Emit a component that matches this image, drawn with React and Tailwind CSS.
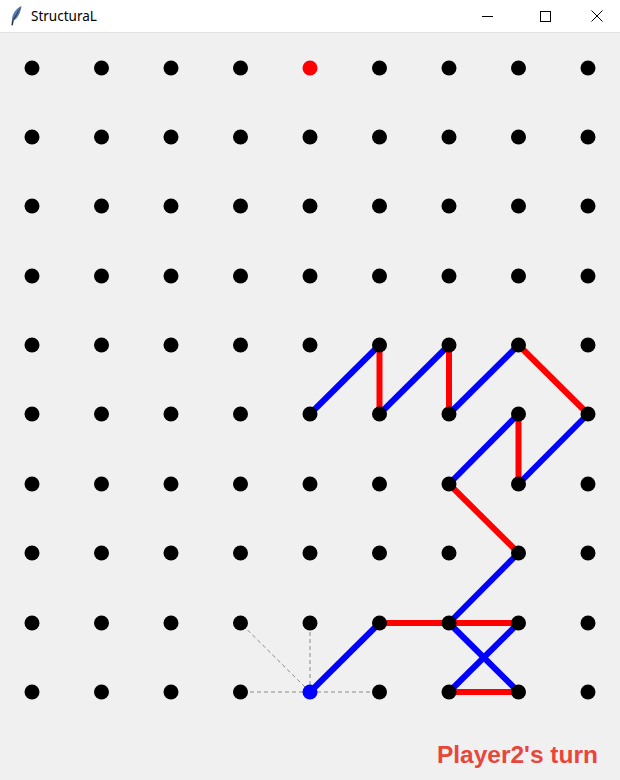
import React from 'react';

const xs = [32, 101.5, 171, 240.5, 310, 379.5, 449, 518.5, 588];
const ys = [35, 104, 173, 243, 312, 381, 451, 520, 590, 659];

const BLUE = '#0000ff';
const RED = '#ff0000';

// [c1, r1, c2, r2, colour]
const lines = [
    [4, 5, 5, 4, BLUE],
    [5, 4, 5, 5, RED],
    [5, 5, 6, 4, BLUE],
    [6, 4, 6, 5, RED],
    [6, 5, 7, 4, BLUE],
    [7, 4, 8, 5, RED],
    [8, 5, 7, 6, BLUE],
    [7, 5, 7, 6, RED],
    [7, 5, 6, 6, BLUE],
    [6, 6, 7, 7, RED],
    [7, 7, 6, 8, BLUE],
    [5, 8, 7, 8, RED],
    [6, 8, 7, 9, BLUE],
    [7, 8, 6, 9, BLUE],
    [6, 9, 7, 9, RED],
    [5, 8, 4, 9, BLUE],
];

const hints = [[3, 8], [4, 8], [3, 9], [5, 9]];

function TitleBar() {
    return (
        <div className="flex h-[33px] items-center border-b border-[#e3e3e3] bg-white">
            <svg width="14" height="22" viewBox="0 0 14 22" className="ml-[9px]">
                <path d="M12.5 1 C7 3.5 3.5 8.5 3 14 L2.5 20 L4 20 L4.8 15.5 C8.5 13.5 11.5 8 12.5 1 Z" fill="#5a7aa8" />
                <path d="M12.5 1 C10 6 7.5 11 4.8 15.5 L4.2 14 C6.5 10 9.5 5.5 12.5 1 Z" fill="#27375a" />
                <path d="M3 20.5 L4 15" stroke="#1a2540" strokeWidth="1" />
            </svg>
            <span className="ml-[8px] text-[13.5px] text-black" style={{ fontFamily: '"Noto Sans", "Open Sans", sans-serif' }}>
                StructuraL
            </span>
            <div className="ml-auto flex h-full">
                <div className="flex w-[58px] items-center justify-center">
                    <div className="h-px w-[11px] bg-black" />
                </div>
                <div className="flex w-[58px] items-center justify-center">
                    <div className="h-[11px] w-[11px] border border-black" />
                </div>
                <div className="flex w-[46px] items-center justify-center">
                    <svg width="12" height="12" viewBox="0 0 12 12">
                        <path d="M0.5 0.5 L11.5 11.5 M11.5 0.5 L0.5 11.5" stroke="#000" strokeWidth="1" />
                    </svg>
                </div>
            </div>
        </div>
    );
}

export default function App() {
    return (
        <div className="h-[780px] w-[620px] overflow-hidden bg-[#f0f0f0]">
            <TitleBar />
            <svg width="620" height="747" className="block">
                {hints.map(([c, r], i) => (
                    <line
                        key={i}
                        x1={xs[4]}
                        y1={ys[9]}
                        x2={xs[c]}
                        y2={ys[r]}
                        stroke="#8a8a8a"
                        strokeWidth="1"
                        strokeDasharray="4 3"
                    />
                ))}
                {lines.map(([c1, r1, c2, r2, col], i) => (
                    <line key={i} x1={xs[c1]} y1={ys[r1]} x2={xs[c2]} y2={ys[r2]} stroke={col} strokeWidth="6" />
                ))}
                {ys.map((y, r) =>
                    xs.map((x, c) => {
                        let fill = '#000';
                        if (c === 4 && r === 0) fill = RED;
                        if (c === 4 && r === 9) fill = BLUE;
                        return <circle key={`${c}-${r}`} cx={x} cy={y} r="7.5" fill={fill} />;
                    })
                )}
                <text
                    x="598"
                    y="730"
                    textAnchor="end"
                    fill="#e8463a"
                    fontSize="24.5"
                    fontWeight="bold"
                    fontFamily='"Liberation Sans", Arial, sans-serif'
                >
                    Player2's turn
                </text>
            </svg>
        </div>
    );
}
